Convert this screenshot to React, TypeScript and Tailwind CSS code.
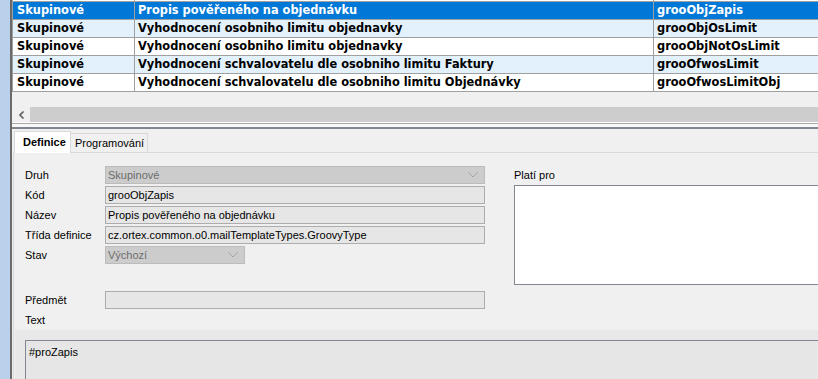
import React from "react";

const rows = [
  { druh: "Skupinové", nazev: "Propis pověřeného na objednávku", kod: "grooObjZapis" },
  { druh: "Skupinové", nazev: "Vyhodnocení osobniho limitu objednavky", kod: "grooObjOsLimit" },
  { druh: "Skupinové", nazev: "Vyhodnocení osobniho limitu objednavky", kod: "grooObjNotOsLimit" },
  { druh: "Skupinové", nazev: "Vyhodnocení schvalovatelu dle osobniho limitu Faktury", kod: "grooOfwosLimit" },
  { druh: "Skupinové", nazev: "Vyhodnocení schvalovatelu dle osobniho limitu Objednávky", kod: "grooOfwosLimitObj" },
];

const rowBg = ["bg-[#0078d7] text-white", "bg-[#e3f1fd] text-black", "bg-white text-black", "bg-[#e3f1fd] text-black", "bg-white text-black"];

function Chevron() {
  return (
    <svg width="10" height="6" viewBox="0 0 10 6" className="shrink-0">
      <path d="M0.5 0.5 L5 5 L9.5 0.5" fill="none" stroke="#a3a3a3" strokeWidth="1" />
    </svg>
  );
}

function Label({ children }: { children: React.ReactNode }) {
  return <div className="w-[80px] shrink-0 text-[11px] text-black leading-none">{children}</div>;
}

function Field({ value, className = "" }: { value: string; className?: string }) {
  return (
    <div className={`h-[18px] w-[380px] flex items-center border border-[#adadad] bg-[#e6e6e6] pl-[2px] text-[11px] text-black ${className}`}>
      {value}
    </div>
  );
}

function Combo({ value, width }: { value: string; width: string }) {
  return (
    <div className={`h-[18px] ${width} flex items-center justify-between border border-[#bcbcbc] bg-[#cccccc] pl-[2px] pr-[6px] text-[11px] text-[#6d6d6d]`}>
      <span>{value}</span>
      <Chevron />
    </div>
  );
}

export default function App() {
  return (
    <div className="flex h-[379px] w-[818px] overflow-hidden bg-[#f0f0f0]" style={{ fontFamily: '"Liberation Sans", Arial, sans-serif' }}>
      <div className="w-[10px] shrink-0 bg-[#b9d1ea]" />
      <div className="w-[2px] shrink-0 bg-[#6b6b6b]" />
      <div className="flex min-w-0 flex-1 flex-col">
        {/* grid */}
        <div className="border-l border-[#a0a0a0]" style={{ fontFamily: '"DejaVu Sans", Verdana, sans-serif' }}>
          <div className="flex h-[2px] border-b border-[#a0a0a0] bg-white">
            <div className="w-[122px] shrink-0 border-r border-[#a0a0a0]" />
            <div className="w-[519px] shrink-0 border-r border-[#a0a0a0]" />
            <div className="flex-1" />
          </div>
          {rows.map((r, i) => (
            <div key={i} className={`flex h-[18px] border-b border-[#a0a0a0] text-[11.4px] font-bold whitespace-nowrap ${rowBg[i]}`}>
              <div className="flex w-[122px] shrink-0 items-center border-r border-[#a0a0a0] pl-[4px]">{r.druh}</div>
              <div className="flex w-[519px] shrink-0 items-center border-r border-[#a0a0a0] pl-[3px]">{r.nazev}</div>
              <div className="flex flex-1 items-center pl-[3px]">{r.kod}</div>
            </div>
          ))}
        </div>
        <div className="h-[15px]" />
        {/* horizontal scrollbar */}
        <div className="flex h-[15px] pl-[1px]">
          <div className="flex w-[17px] items-center justify-center">
            <svg width="6" height="8" viewBox="0 0 6 8">
              <path d="M4.5 0.5 L1 4 L4.5 7.5" fill="none" stroke="#606060" strokeWidth="1.6" />
            </svg>
          </div>
          <div className="flex-1 bg-[#cdcdcd]" />
        </div>
        <div className="h-px bg-white" />
        <div className="h-px bg-[#a8a8a8]" />
        <div className="h-[3px] bg-[#f8f8f8]" />
        <div className="h-[2px] bg-[#80868e]" />
        {/* tabs */}
        <div className="flex items-end pl-[2px] pt-[2px]">
          <div className="relative z-10 -mb-px flex h-[22px] w-[57px] items-center border border-b-0 border-[#d9d9d9] bg-white pl-[8px] text-[11px] font-bold text-black">
            Definice
          </div>
          <div className="flex h-[19px] w-[77px] items-center border border-b-0 border-l-0 border-[#d9d9d9] bg-[#f0f0f0] pl-[4px] text-[11px] text-black">
            Programování
          </div>
        </div>
        <div className="ml-px flex flex-1 flex-col border-l border-t border-[#d9d9d9]">
          <div className="flex pl-[11px] pt-[13px]">
            <div className="flex w-[460px] shrink-0 flex-col">
              <div className="flex h-[18px] items-center"><Label>Druh</Label><Combo value="Skupinové" width="w-[380px]" /></div>
              <div className="mt-[2px] flex h-[18px] items-center"><Label>Kód</Label><Field value="grooObjZapis" /></div>
              <div className="mt-[2px] flex h-[18px] items-center"><Label>Název</Label><Field value="Propis pověřeného na objednávku" /></div>
              <div className="mt-[2px] flex h-[18px] items-center"><Label>Třída definice</Label><Field value="cz.ortex.common.o0.mailTemplateTypes.GroovyType" /></div>
              <div className="mt-[2px] flex h-[18px] items-center"><Label>Stav</Label><Combo value="Výchozí" width="w-[140px]" /></div>
              <div className="mt-[27px] flex h-[18px] items-center"><Label>Předmět</Label><Field value="" /></div>
              <div className="mt-[2px] flex h-[19px] items-center"><Label>Text</Label></div>
            </div>
            <div className="ml-[29px] flex min-w-0 flex-1 flex-col">
              <div className="flex h-[19px] items-center text-[11px] text-black">Platí pro</div>
              <div className="h-[100px] w-[320px] border border-[#828790] bg-white" />
            </div>
          </div>
          <div className="ml-px flex-1 bg-[#e8e8e8] pl-[10px] pt-[10px]">
            <div className="h-full border-l border-t border-[#828790] bg-[#e6e6e6] pl-[3px] pt-[3px] text-[11px] text-black">
              #proZapis
            </div>
          </div>
        </div>
      </div>
    </div>
  );
}
